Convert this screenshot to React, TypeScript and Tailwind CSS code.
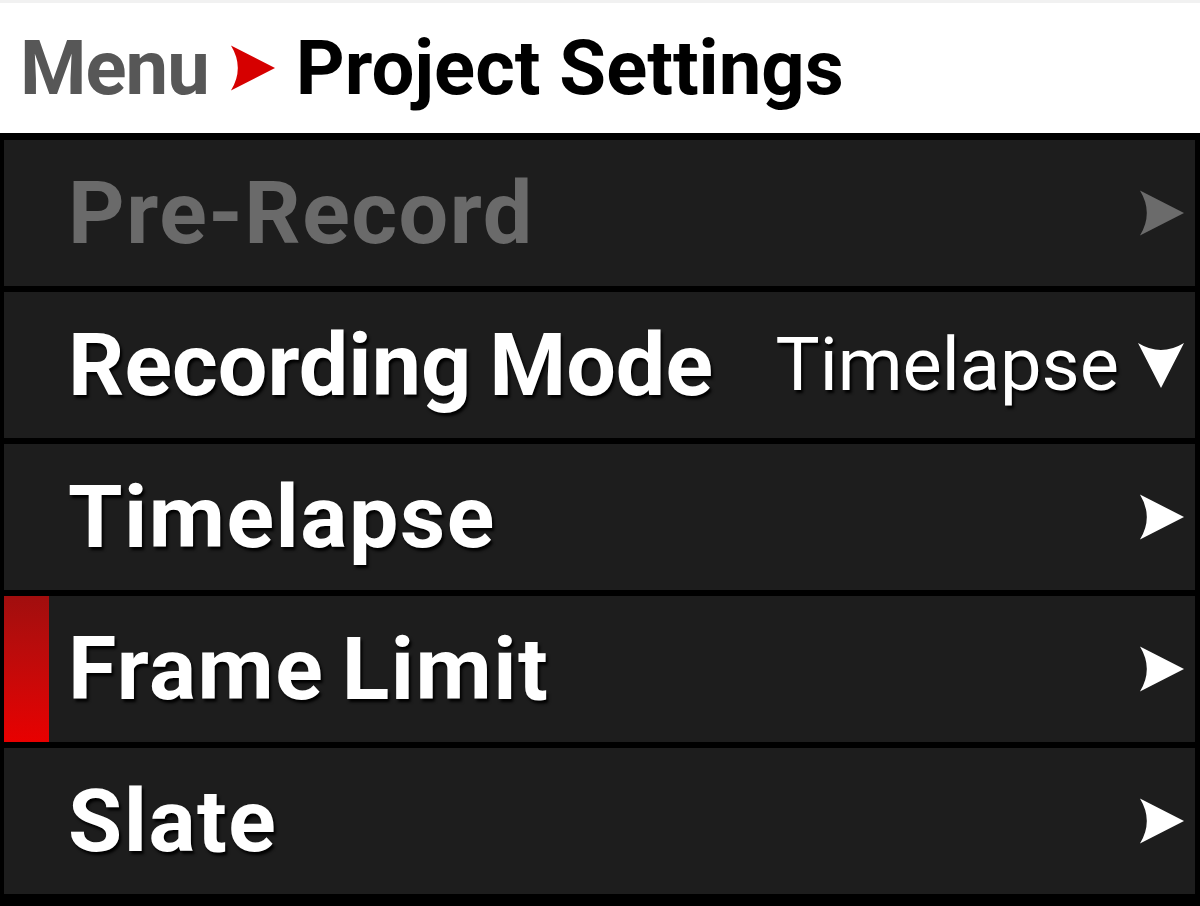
import React from 'react';

type Row = {
  label: string;
  disabled?: boolean;
  selected?: boolean;
  value?: string;
};

const rows: Row[] = [
  { label: 'Pre-Record', disabled: true },
  { label: 'Recording Mode', value: 'Timelapse' },
  { label: 'Timelapse' },
  { label: 'Frame Limit', selected: true },
  { label: 'Slate' },
];

const Arrow: React.FC<{ className?: string; down?: boolean }> = ({ className, down }) => (
  <svg
    viewBox="0 0 48 48"
    className={className}
    style={down ? { transform: 'rotate(90deg)' } : undefined}
  >
    <path d="M2 1 L47 24 L2 47 Q16 24 2 1 Z" fill="currentColor" />
  </svg>
);

export default function App() {
  return (
    <div
      className="w-[1200px] h-[906px] bg-black flex flex-col overflow-hidden"
      style={{ fontFamily: 'Roboto, "Noto Sans", sans-serif' }}
    >
      <div className="h-[133px] bg-white border-t-[3px] border-[#f1f1f1] flex items-center pl-[20px] gap-[20px]">
        <span className="text-[76px] font-bold text-[#575757] leading-none tracking-[-1px]">Menu</span>
        <Arrow className="w-[47px] h-[48px] text-[#d60000]" />
        <span className="text-[76px] font-bold text-black leading-none">Project Settings</span>
      </div>

      <div className="flex-1 flex flex-col gap-[6px] pl-[4px] pr-[5px] pt-[7px] pb-[12px]">
        {rows.map((row) => (
          <div key={row.label} className="h-[146px] bg-[#1d1d1d] flex items-stretch">
            <div
              className={
                row.selected
                  ? 'w-[45px] bg-gradient-to-b from-[#a10e0e] to-[#e80000]'
                  : 'w-[45px]'
              }
            />
            <div className="flex-1 flex items-center pl-[19px] pr-[10px]">
              <span
                className={
                  row.disabled
                    ? 'text-[88px] font-bold leading-none text-[#6a6a6a] tracking-[1.5px]'
                    : row.value
                      ? 'text-[88px] font-bold leading-none text-white [word-spacing:-4px] [text-shadow:2px_3px_3px_#000]'
                      : 'text-[88px] font-bold leading-none text-white tracking-[1.5px] [word-spacing:-6px] [text-shadow:2px_3px_3px_#000]'
                }
              >
                {row.label}
              </span>
              <div className="flex-1" />
              {row.value ? (
                <div className="flex items-center gap-[18px]">
                  <span className="text-[74px] leading-none text-white [text-shadow:2px_3px_3px_#000]">
                    {row.value}
                  </span>
                  <Arrow down className="w-[48px] h-[48px] text-white" />
                </div>
              ) : (
                <Arrow
                  className={
                    row.disabled
                      ? 'w-[47px] h-[48px] text-[#6b6b6b]'
                      : 'w-[47px] h-[48px] text-white'
                  }
                />
              )}
            </div>
          </div>
        ))}
      </div>
    </div>
  );
}
